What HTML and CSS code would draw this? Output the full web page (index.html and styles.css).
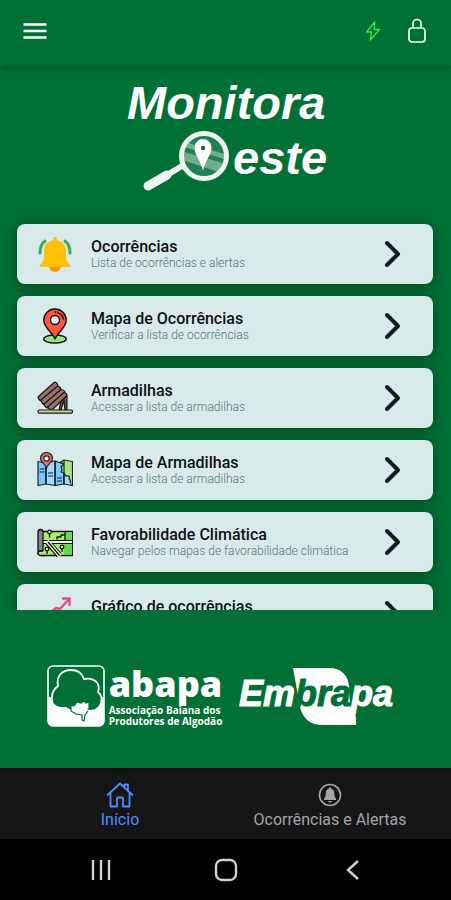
FILE: index.html
```html
<!DOCTYPE html>
<html lang="pt-BR">
<head>
    <meta charset="UTF-8">
    <meta name="viewport" content="width=device-width, initial-scale=1.0">
    <title>Monitora Oeste</title>
    <link rel="stylesheet" href="styles.css">
</head>
<body>
    <header class="topo">
        <button class="botao-topo" aria-label="Menu">
            <svg width="24" height="18" viewBox="0 0 24 18"><path d="M.5 2.500h23M.5 9h23M.5 15.500h23" stroke="#fff" stroke-width="2.400"/></svg>
        </button>
        <div class="topo-acoes">
            <button class="botao-topo" aria-label="Conexão">
                <svg width="16" height="20" viewBox="0 0 16 20"><path d="M9.700 1 1.500 11h5L5.300 19 14.500 8.500H9.300z" fill="none" stroke="#2bee3a" stroke-width="1.300" stroke-linejoin="round"/></svg>
            </button>
            <button class="botao-topo" aria-label="Bloquear">
                <svg width="20" height="26" viewBox="0 0 20 26"><g fill="none" stroke="#e8fff0" stroke-width="1.700"><rect x="2" y="10" width="16" height="14" rx="3"/><path d="M6 10V5.500a4 4 0 0 1 8 0V10"/></g></svg>
            </button>
        </div>
    </header>

    <main class="conteudo">
        <h1 class="marca">
            <svg width="210" height="120" viewBox="0 0 210 120" role="img" aria-label="Monitora Oeste">
                <text class="marca-texto" x="6" y="45">Monitora</text>
                <path d="M27 112 46 101" stroke="#eef5f0" stroke-width="9" stroke-linecap="round"/>
                <path d="M46 101 66 89" stroke="#eef5f0" stroke-width="6"/>
                <circle cx="83" cy="82" r="22.500" fill="#218052"/>
                <path d="M65 68l38 12v5L63 73zM63 78l39 11-5 9-35-12z" fill="#6fad8b"/>
                <circle cx="83" cy="82" r="22.500" fill="none" stroke="#eef5f0" stroke-width="5"/>
                <path d="M82 97C80 86 73.500 82 73.500 73.500a8.500 8.500 0 0 1 17 0C90.500 82 84 86 82 97z" fill="#fff"/>
                <circle cx="82" cy="74" r="2.200" fill="#007035"/>
                <text class="marca-texto" x="112" y="100">este</text>
            </svg>
        </h1>

        <nav class="lista" aria-label="Opções">
            <a class="item" href="#ocorrencias">
                <svg class="item-icone" viewBox="0 0 36 36">
                    <path d="M3 17Q3 8.500 8 5M33 17Q33 8.500 28 5" fill="none" stroke="#43a75a" stroke-width="3" stroke-linecap="round"/>
                    <path d="M12 30h12a6 6 0 0 1-12 0z" fill="#ff9800"/>
                    <path d="M16.200 2.500a1.800 1.800 0 0 1 3.600 0v1.700c6 1 9.200 5.300 9.200 10.300v6c0 4 1 5.500 3 7.500 2 1.800 1.500 3-.5 3h-27c-2 0-2.500-1.200-.5-3 2-2 3-3.500 3-7.500v-6c0-5 3.200-9.300 9.200-10.300z" fill="#ffc107"/>
                </svg>
                <span class="item-texto">
                    <span class="item-titulo">Ocorrências</span>
                    <span class="item-descricao">Lista de ocorrências e alertas</span>
                </span>
                <svg class="seta" viewBox="0 0 18 28"><path d="M3 3l11 11L3 25"/></svg>
            </a>
            <a class="item" href="#mapa-ocorrencias">
                <svg class="item-icone" viewBox="0 0 36 36" stroke="#111" stroke-width="1.400" stroke-linejoin="round">
                    <ellipse cx="18" cy="31" rx="11.300" ry="4" fill="#90e878"/>
                    <path d="M18 31C15 24 6.800 19.500 6.800 12.200a11.200 11.200 0 0 1 22.400 0C29.200 19.500 21 24 18 31z" fill="#fc573b"/>
                    <circle cx="18" cy="12" r="4.500" fill="#e3f4f2"/>
                    <path d="M18 4h1M21 4.800c3 1 5 3.500 5.300 6.200" fill="none" stroke-linecap="round"/>
                </svg>
                <span class="item-texto">
                    <span class="item-titulo">Mapa de Ocorrências</span>
                    <span class="item-descricao">Verificar a lista de ocorrências</span>
                </span>
                <svg class="seta" viewBox="0 0 18 28"><path d="M3 3l11 11L3 25"/></svg>
            </a>
            <a class="item" href="#armadilhas">
                <svg class="item-icone" viewBox="0 0 36 36" stroke="#1b1515" stroke-width="1.200" stroke-linejoin="round">
                    <path d="M25 17 22 30h2l3-10 1 10h2V16z" fill="#735149"/>
                    <path d="M1 17 17 2.500q2-1 3 1l1 2L5 21q-3 0-4-4z" fill="#95736c"/>
                    <path d="M4 20 20 6.500q3-.5 4 3L8 24.500q-3 0-4-4.500z" fill="#95736c"/>
                    <path d="M7 24 24 9.500q4 .5 4 3L12 28q-4 0-5-4z" fill="#95736c"/>
                    <path d="M10.500 27 27 12.500q3 .5 3 3L16 29q-4 1-5.500-2z" fill="#95736c"/>
                    <rect x="1" y="30" width="34.500" height="3.200" rx="1.600" fill="#b8df9b"/>
                </svg>
                <span class="item-texto">
                    <span class="item-titulo">Armadilhas</span>
                    <span class="item-descricao">Acessar a lista de armadilhas</span>
                </span>
                <svg class="seta" viewBox="0 0 18 28"><path d="M3 3l11 11L3 25"/></svg>
            </a>
            <a class="item" href="#mapa-armadilhas">
                <svg class="item-icone" viewBox="0 0 36 36" stroke="#17232b" stroke-width="1.200" stroke-linejoin="round">
                    <path d="M1 9.500 9 11v21l-8 1.500zM18 9l9 3v20l-9 1.500z" fill="#7cc5fa"/>
                    <path d="M9 11l9-2v24.500L9 32zM27 12l8.500-2.500v24L27 32z" fill="#a4d7fb"/>
                    <path d="M23 10.500 27 12l-3 3q2 3 0 5 5 1 4 4 6-1 4 3 2 1 1 3l2.500 3.500v-24L27 8z" fill="#a9e57b"/>
                    <path d="M9 12v20M18 10v23M27 8.500V32M2.500 17h5M2.500 20h5M11 21h5M11 24h5M20 26h5M20 29h5" fill="none"/>
                    <path d="M9.500 16C8 11.500 3.500 10 3.500 6.500a6 6 0 0 1 12 0C15.500 10 11 11.500 9.500 16z" fill="#f26b68"/>
                    <circle cx="9.500" cy="6.500" r="2.700" fill="#e4f0f0"/>
                </svg>
                <span class="item-texto">
                    <span class="item-titulo">Mapa de Armadilhas</span>
                    <span class="item-descricao">Acessar a lista de armadilhas</span>
                </span>
                <svg class="seta" viewBox="0 0 18 28"><path d="M3 3l11 11L3 25"/></svg>
            </a>
            <a class="item" href="#favorabilidade">
                <svg class="item-icone" viewBox="0 0 36 36" stroke="#111" stroke-width="1.300" stroke-linejoin="round">
                    <path d="M4 7.500h31.500v24H4z" fill="#a9ee68"/>
                    <path d="M28 8.200h6.800v8.300H28zM27 20h7.800v10.800H27z" fill="#63da48" stroke="none"/>
                    <path d="M6 18h29" stroke-width="4"/>
                    <path d="M11 18.500 22 31" stroke-width="6"/>
                    <path d="M6 18h29M11 18.500 22 31" stroke="#e8f5df" stroke-width="2"/>
                    <path d="M10 17 23 32" stroke="#e8f5df" stroke-width="4"/>
                    <path d="M11 18 22.500 31.500"/>
                    <path d="M28 8v8M20 15.500V13h4v-2h4" fill="none"/>
                    <path d="M12.500 9.500v4M10 26v4M25 24v4" fill="none"/>
                    <g fill="#e8f5df"><circle cx="12.500" cy="8" r="1.800"/><circle cx="10" cy="25" r="1.800"/><circle cx="25" cy="23" r="1.800"/></g>
                    <path d="M1 8q0-2.500 2.500-2.500T6 8v19H3.500Q1 27 1 30z" fill="#858489"/>
                    <path d="M6 27H3.500q-2.500 0-2.500 2t2.500 2.500H8" fill="#a9ee68"/>
                </svg>
                <span class="item-texto">
                    <span class="item-titulo">Favorabilidade Climática</span>
                    <span class="item-descricao">Navegar pelos mapas de favorabilidade climática</span>
                </span>
                <svg class="seta" viewBox="0 0 18 28"><path d="M3 3l11 11L3 25"/></svg>
            </a>
            <a class="item" href="#grafico">
                <svg class="item-icone" viewBox="0 0 36 36">
                    <path d="M3 28l12-13 4-3 4 1L32 3M25 2.500h7.500V10" fill="none" stroke="#dc4f8c" stroke-width="2.400"/>
                    <path d="M3 34V31M12 34V23M21 34V20M30 34V18" stroke="#4b8bd0" stroke-width="5"/>
                </svg>
                <span class="item-texto">
                    <span class="item-titulo">Gráfico de ocorrências</span>
                </span>
                <svg class="seta" viewBox="0 0 18 28"><path d="M3 3l11 11L3 25"/></svg>
            </a>
        </nav>

        <div class="parceiros">
            <div class="abapa">
                <svg width="58" height="62" viewBox="0 0 58 62">
                    <rect x="1" y="1" width="56" height="60" rx="5" fill="none" stroke="#fff" stroke-width="1.600"/>
                    <path d="M1 32h56v24q0 5-5 5H6q-5 0-5-5z" fill="#fff"/>
                    <path d="M11 21C9 11 15 5 24 5c6 0 11 3 13 9 10-2 17 4 14 13 6 5 4 15-3 18-6 2-8 0-12-2-6 4-12 4-17 0C8 44 4 39 5 32c0-5 2-8 6-11z" fill="#007035" stroke="#fff" stroke-width="1.800"/>
                    <path d="M24 48v-8l3 1 3-4 4 1 3-2 2 2 3-1v5l-3 3 1 3-3 3-1 5-2 1 1-6-4-3z" fill="#fff"/>
                    <path d="M24 46v-6l3 1 3-4 4 1 3-2 2 2 3-1v5M24 46l5 3 6 1v5l2 1 1-6 3-4" fill="none" stroke="#007035" stroke-width="1.200"/>
                </svg>
                <div class="abapa-texto">
                    <strong class="abapa-nome">abapa</strong>
                    <span class="abapa-linha">Associação Baiana dos<br>Produtores de Algodão</span>
                </div>
            </div>
            <svg class="embrapa-logo" width="160" height="62" viewBox="0 0 160 62" role="img" aria-label="Embrapa">
                <path d="M57 3h36c12 0 19 7 20 18l1 20c3 3 7 7 6 19H87C73 60 67 53 64 42z" fill="#fff"/>
                <text class="embrapa" x="3" y="41">Em<tspan class="embrapa-verde">bra</tspan>pa</text>
            </svg>
        </div>
    </main>

    <nav class="abas" aria-label="Abas">
        <a class="aba aba-ativa" href="#inicio">
            <svg width="28" height="26" viewBox="0 0 28 26"><path d="M1.500 13 14 1.500 26.500 13M4.500 11v13.500H11V16.500q0-1 1-1h4q1 0 1 1v8h6.500V11M18.500 5V2.500H22V9" fill="none" stroke="currentColor" stroke-width="1.800" stroke-linejoin="round" stroke-linecap="round"/></svg>
            <span>Início</span>
        </a>
        <a class="aba" href="#alertas">
            <svg width="28" height="26" viewBox="0 0 28 26"><circle cx="14" cy="13" r="10.500" fill="none" stroke="currentColor" stroke-width="1.600"/><path d="M14 5.500c.8 0 1.200.5 1.300 1.200 2 .6 3 2.200 3 4.300 0 3 .4 4.200 1.700 5.500v1.500H8v-1.500c1.300-1.300 1.700-2.500 1.700-5.500 0-2.100 1-3.700 3-4.300.1-.7.500-1.200 1.300-1.200zM12 19h4q-.5 1.500-2 1.500T12 19z" fill="currentColor"/></svg>
            <span>Ocorrências e Alertas</span>
        </a>
    </nav>

    <div class="sistema">
        <button class="botao-sistema" aria-label="Recentes">
            <svg width="24" height="24" viewBox="0 0 24 24"><path d="M4 2v20M12 2v20M20 2v20"/></svg>
        </button>
        <button class="botao-sistema" aria-label="Tela inicial">
            <svg width="24" height="24" viewBox="0 0 24 24"><rect x="2" y="2" width="20" height="20" rx="6"/></svg>
        </button>
        <button class="botao-sistema" aria-label="Voltar">
            <svg width="24" height="24" viewBox="0 0 24 24"><path d="M18 3 8 12l10 9"/></svg>
        </button>
    </div>
</body>
</html>
```

FILE: styles.css
```css
* {
    box-sizing: border-box;
}
body {
    margin: 0;
    height: 100vh;
    display: flex;
    flex-direction: column;
    background: #007035;
    font-family: Roboto, sans-serif;
}
button {
    padding: 0;
    border: 0;
    background: none;
    cursor: pointer;
}
svg {
    display: block;
    flex-shrink: 0;
}
a {
    text-decoration: none;
}

/* topo */
.topo {
    height: 66px;
    flex-shrink: 0;
    display: flex;
    align-items: center;
    justify-content: space-between;
    padding: 0 24px 4px 23px;
    box-shadow: 0 2px 6px rgba(0, 0, 0, 0.3);
}
.topo-acoes {
    display: flex;
    align-items: center;
    gap: 26px;
}

/* conteúdo */
.conteudo {
    flex: 1;
    min-height: 0;
    display: flex;
    flex-direction: column;
}
.marca {
    margin: 0;
    padding-top: 8px;
    flex-shrink: 0;
    display: flex;
    justify-content: center;
}
.marca-texto {
    font: italic bold 47px "Liberation Sans", Arial, sans-serif;
    fill: #fff;
}
.lista {
    flex: 1;
    min-height: 0;
    margin-top: 10px;
    padding: 20px 18px 12px 17px;
    display: flex;
    flex-direction: column;
    gap: 12px;
    overflow-y: auto;
    scrollbar-width: none;
}
.item {
    height: 60px;
    flex-shrink: 0;
    display: flex;
    align-items: center;
    gap: 18px;
    padding: 0 31px 0 20px;
    border-radius: 8px;
    background: #d9eaea;
    box-shadow: 0 3px 14px rgba(0, 0, 0, 0.4);
}
.item-icone {
    width: 36px;
    height: 36px;
}
.item-texto {
    flex: 1;
    min-width: 0;
    min-height: 33px;
    display: flex;
    flex-direction: column;
}
.item-titulo {
    font-size: 16px;
    font-weight: 500;
    line-height: 18px;
    color: #0b1214;
}
.item-descricao {
    font-size: 12px;
    font-weight: 300;
    line-height: 15px;
    color: #5c757c;
}
.seta {
    width: 18px;
    height: 28px;
    fill: none;
    stroke: #0c1f24;
    stroke-width: 4;
    stroke-linecap: round;
    stroke-linejoin: round;
}

/* parceiros */
.parceiros {
    height: 158px;
    flex-shrink: 0;
    display: flex;
    align-items: center;
    justify-content: center;
    gap: 14px;
    padding: 14px 8px 0 0;
    color: #fff;
}
.abapa {
    display: flex;
    align-items: center;
    gap: 4px;
}
.abapa-texto {
    display: flex;
    flex-direction: column;
    font-family: "Open Sans", sans-serif;
}
.abapa-nome {
    font-size: 36px;
    font-weight: 800;
    line-height: 38px;
}
.abapa-linha {
    font-size: 10px;
    font-weight: 700;
    line-height: 11px;
    padding-top: 2px;
    white-space: nowrap;
}
.embrapa {
    font: italic bold 36px "Liberation Sans", Arial, sans-serif;
    fill: #fff;
    stroke: #fff;
    stroke-width: 1px;
}
.embrapa-verde {
    fill: #007035;
    stroke: #007035;
}

/* abas */
.abas {
    height: 71px;
    flex-shrink: 0;
    display: flex;
    padding: 0 16px 0 15px;
    background: #151515;
    border-top: 2px solid #070b09;
}
.aba {
    flex: 1;
    display: flex;
    flex-direction: column;
    align-items: center;
    justify-content: center;
    gap: 2px;
    padding-top: 2px;
    font-size: 16px;
    line-height: 20px;
    color: #a3a3a8;
}
.aba-ativa {
    color: #4c8dff;
}

/* barra do sistema */
.sistema {
    height: 61px;
    flex-shrink: 0;
    display: grid;
    grid-template-columns: repeat(3, 1fr);
    padding: 0 36px 0 38px;
    background: #000;
}
.botao-sistema {
    display: flex;
    align-items: center;
    justify-content: center;
    fill: none;
    stroke: #d0d0d0;
    stroke-width: 2.4;
}
```
